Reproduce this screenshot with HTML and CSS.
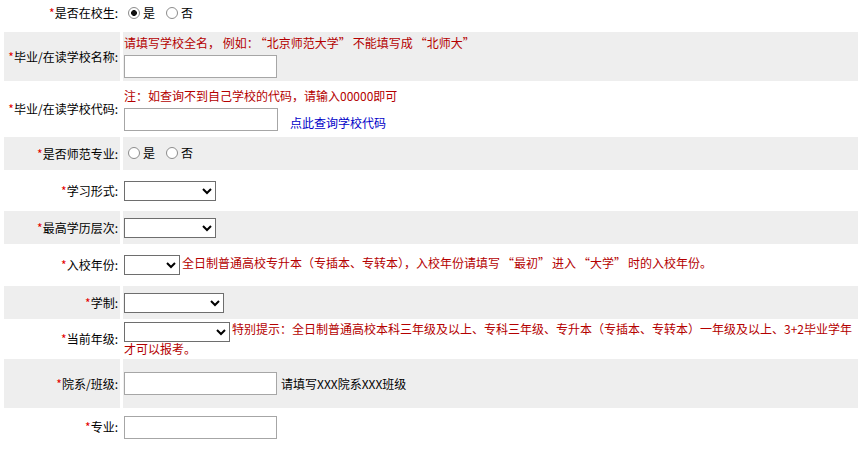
FILE: index.html
```html
<!DOCTYPE html>
<html lang="zh-CN">
<head>
<meta charset="utf-8">
<title>报名信息</title>
<link rel="stylesheet" href="styles.css">
</head>
<body>
<table class="form">
  <colgroup><col class="c-lbl"><col class="c-val"></colgroup>
  <tr class="r1">
    <td class="lbl top"><span class="req">*</span>是否在校生:</td>
    <td class="val top">
      <label class="opt"><input type="radio" name="zx" checked>是</label><label class="opt"><input type="radio" name="zx">否</label>
    </td>
  </tr>
  <tr class="r2 alt">
    <td class="lbl"><span class="req">*</span>毕业/在读学校名称:</td>
    <td class="val">
      <div class="hint">请填写学校全名， 例如：<span class="q">“北京师范大学”</span>不能填写成<span class="q">“北师大”</span></div>
      <div class="field"><input type="text" class="txt"></div>
    </td>
  </tr>
  <tr class="r3">
    <td class="lbl"><span class="req">*</span>毕业/在读学校代码:</td>
    <td class="val">
      <div class="hint">注：如查询不到自己学校的代码，请输入00000即可</div>
      <div class="field"><input type="text" class="txt w154"><a class="lookup" href="#">点此查询学校代码</a></div>
    </td>
  </tr>
  <tr class="r4 alt">
    <td class="lbl"><span class="req">*</span>是否师范专业:</td>
    <td class="val">
      <label class="opt"><input type="radio" name="sf">是</label><label class="opt"><input type="radio" name="sf">否</label>
    </td>
  </tr>
  <tr class="r5">
    <td class="lbl"><span class="req">*</span>学习形式:</td>
    <td class="val"><select class="sel w92"><option></option></select></td>
  </tr>
  <tr class="r6 alt">
    <td class="lbl"><span class="req">*</span>最高学历层次:</td>
    <td class="val"><select class="sel w92"><option></option></select></td>
  </tr>
  <tr class="r7">
    <td class="lbl"><span class="req">*</span>入校年份:</td>
    <td class="val"><select class="sel w56"><option></option></select><span class="hint after">全日制普通高校专升本（专插本、专转本），入校年份请填写<span class="q">“最初”</span>进入<span class="q">“大学”</span>时的入校年份。</span></td>
  </tr>
  <tr class="r8 alt">
    <td class="lbl"><span class="req">*</span>学制:</td>
    <td class="val"><select class="sel w100"><option></option></select></td>
  </tr>
  <tr class="r9">
    <td class="lbl"><span class="req">*</span>当前年级:</td>
    <td class="val"><select class="sel w106"><option></option></select><span class="hint after">特别提示：全日制普通高校本科三年级及以上、专科三年级、专升本（专插本、专转本）一年级及以上、3+2毕业学年才可以报考。</span></td>
  </tr>
  <tr class="r10 alt">
    <td class="lbl"><span class="req">*</span>院系/班级:</td>
    <td class="val"><input type="text" class="txt"><span class="note">请填写XXX院系XXX班级</span></td>
  </tr>
  <tr class="r11">
    <td class="lbl"><span class="req">*</span>专业:</td>
    <td class="val"><input type="text" class="txt"></td>
  </tr>
</table>
</body>
</html>
```
FILE: styles.css
```css
html, body {
  margin: 0;
  background: #fff;
}
body {
  font-family: "Noto Sans CJK SC", "Noto Sans CJK JP", sans-serif;
  font-size: 12px;
  line-height: 16px;
  color: #111;
}
.form {
  table-layout: fixed;
  border-collapse: separate;
  border-spacing: 3px 1px;
  width: 860px;
  margin: -1px 0 0 1px;
}
.c-lbl { width: 116px; }
.form td {
  padding: 0;
  vertical-align: middle;
  background: #fff;
}
.form tr.alt td { background: #eeeeee; }
.form td.top { vertical-align: top; padding-top: 5px; }
.lbl {
  text-align: right;
  padding-right: 2px !important;
  white-space: nowrap;
  color: #000;
}
.val { padding-left: 1px !important; }
.req { color: #e40000; }
.r1 { height: 31px; }
.r2 { height: 49px; }
.r3 { height: 54px; }
.r4 { height: 33px; }
.r5 { height: 39px; }
.r6 { height: 33px; }
.r7 { height: 40px; }
.r8 { height: 33px; }
.r9 { height: 38px; }
.r10 { height: 49px; }
.r11 { height: 36px; }

.hint { color: #b40000; }
.hint.after { margin-left: 2px; }
.q { padding: 0 2px; }
.field {
  display: flex;
  align-items: flex-end;
  margin-top: 4px;
}
.txt {
  box-sizing: border-box;
  width: 153px;
  height: 23px;
  margin: 0;
  padding: 1px 3px;
  border: 1px solid #a6a6a6;
  background: #fff;
  font: inherit;
  vertical-align: middle;
}
.txt.w154 { width: 154px; }
.lookup {
  margin-left: 12px;
  color: #0000c8;
  text-decoration: none;
  line-height: 16px;
}
.note { margin-left: 4px; vertical-align: middle; color: #000; }
.sel {
  box-sizing: border-box;
  height: 20px;
  margin: 0;
  border: 1px solid #6e6e6e;
  border-radius: 0;
  background: #fff;
  font: inherit;
  vertical-align: middle;
}
.r9 .sel { position: relative; top: 1px; }
.w56 { width: 56px; }
.w92 { width: 92px; }
.w100 { width: 100px; }
.w106 { width: 106px; }

.opt {
  display: inline-flex;
  align-items: center;
  margin-right: 7px;
  color: #000;
}
.opt input {
  appearance: none;
  -webkit-appearance: none;
  box-sizing: border-box;
  width: 12px;
  height: 12px;
  margin: 0 3px 0 4px;
  border: 1px solid #8c8c8c;
  border-radius: 50%;
  background: #fff;
}
.opt input:checked {
  background: radial-gradient(circle, #111 0, #111 2.6px, #fff 3.2px);
}
```
